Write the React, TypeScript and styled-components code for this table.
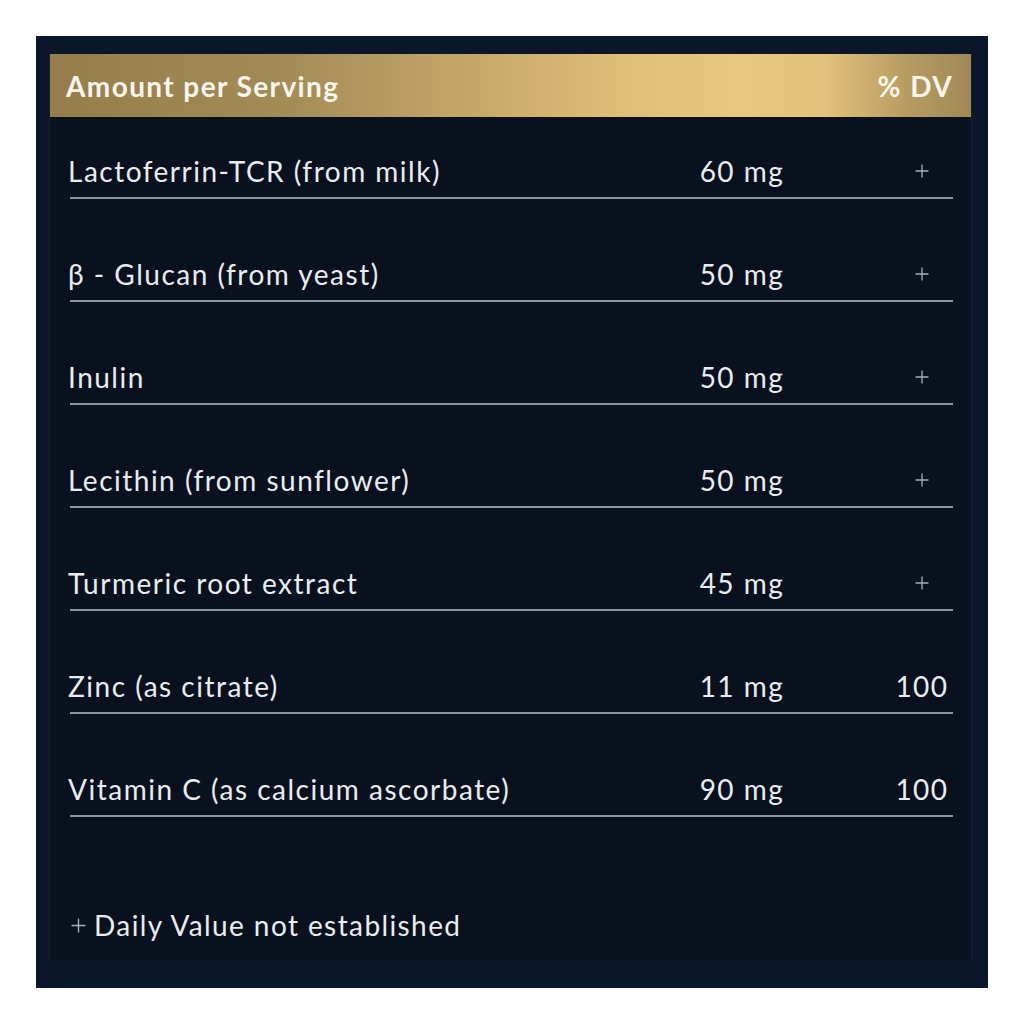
import React from 'react';
import styled, { createGlobalStyle } from 'styled-components';

const rows = [
  { name: 'Lactoferrin-TCR (from milk)', amount: '60 mg', dv: null },
  { name: 'β - Glucan (from yeast)', amount: '50 mg', dv: null },
  { name: 'Inulin', amount: '50 mg', dv: null },
  { name: 'Lecithin (from sunflower)', amount: '50 mg', dv: null },
  { name: 'Turmeric root extract', amount: '45 mg', dv: null },
  { name: 'Zinc (as citrate)', amount: '11 mg', dv: '100' },
  { name: 'Vitamin C (as calcium ascorbate)', amount: '90 mg', dv: '100' },
];

function Dagger({ size = 14 }: { size?: number }) {
  return (
    <svg width={size} height={size} viewBox="0 0 14 14" fill="none">
      <path d="M7 1v12M1 7h12" stroke="#a7afba" strokeWidth="1.3" strokeLinecap="round" />
    </svg>
  );
}

function App() {
  return (
    <>
      <GlobalStyle />
      <Frame>
        <Panel>
          <Header>
            <span>Amount per Serving</span>
            <span>% DV</span>
          </Header>

          <List>
            {rows.map((row) => (
              <Row key={row.name}>
                <Name>{row.name}</Name>
                <Amount>{row.amount}</Amount>
                <Dv>{row.dv ? row.dv : <Dagger />}</Dv>
              </Row>
            ))}
          </List>

          <Footer>
            <Dagger size={15} />
            Daily Value not established
          </Footer>
        </Panel>
      </Frame>
    </>
  );
}

const GlobalStyle = createGlobalStyle`
  body {
    margin: 0;
    background: #fff;
    font-family: Lato, "Noto Sans", sans-serif;
  }
`;

const Frame = styled.div`
  box-sizing: border-box;
  width: 952px;
  height: 952px;
  margin: 36px;
  padding: 18px 16px 28px 13px;
  background: #0a172a;
`;

const Panel = styled.div`
  box-sizing: border-box;
  height: 100%;
  display: flex;
  flex-direction: column;
  background: #08111d;
  border-left: 1px solid #16202d;
  border-right: 1px solid #16202d;
`;

const Header = styled.div`
  height: 63px;
  display: flex;
  align-items: center;
  justify-content: space-between;
  padding: 0 18px 0 16px;
  background: linear-gradient(
    90deg,
    #967e4c 0%,
    #a38b57 25%,
    #c4a668 45%,
    #dfbe77 62%,
    #e8c780 75%,
    #e3c27c 84%,
    #b79c62 93%,
    #a08856 100%
  );
  color: #fbf6ec;
  font-size: 28px;
  font-weight: 700;
  letter-spacing: 1.4px;
`;

const List = styled.div`
  display: flex;
  flex-direction: column;
  gap: 58px;
  padding: 37px 18px 0 20px;
`;

const Row = styled.div`
  display: grid;
  grid-template-columns: 1fr 120px 62px;
  column-gap: 89px;
  align-items: center;
  padding: 0 0 9px 0;
  border-bottom: 2px solid #8a939f;
  color: #e9edf1;
  font-size: 28px;
  line-height: 34px;
  letter-spacing: 1.5px;
`;

const Name = styled.div`
  margin-left: -2px;
`;

const Amount = styled.div`
  text-align: center;
`;

const Dv = styled.div`
  display: flex;
  justify-content: center;
  align-items: center;
  height: 34px;
`;

const Footer = styled.div`
  margin-top: auto;
  display: flex;
  align-items: center;
  gap: 8px;
  padding: 0 0 18px 21px;
  color: #e9edf1;
  font-size: 28px;
  line-height: 34px;
  letter-spacing: 1.4px;
`;

export default App;
